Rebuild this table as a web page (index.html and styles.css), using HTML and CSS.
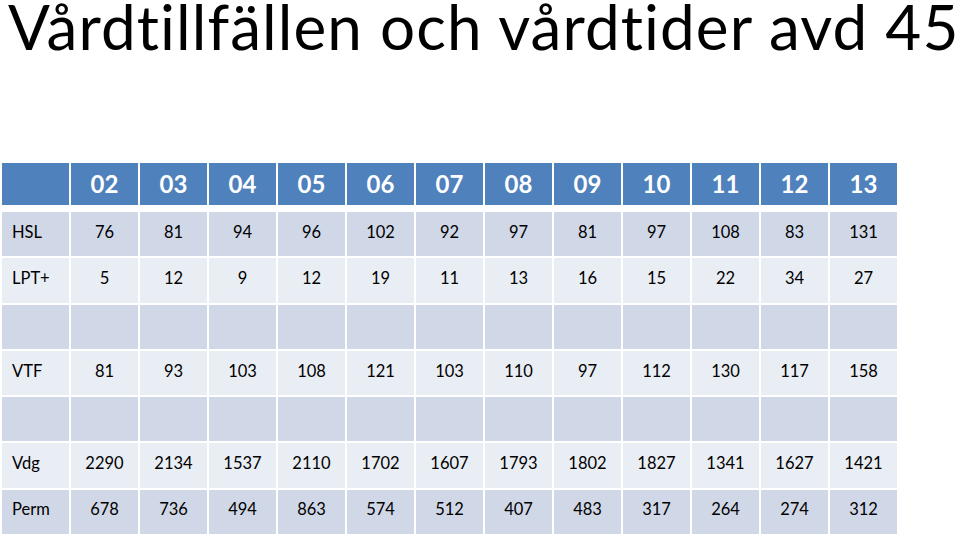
FILE: index.html
```html
<!DOCTYPE html>
<html>
<head>
<meta charset="utf-8">
<link rel="stylesheet" href="styles.css">
</head>
<body>
<h1 class="title">Vårdtillfällen och vårdtider avd 45</h1>
<div class="table">
  <div class="row head"><div class="cell first"></div><div class="cell">02</div><div class="cell">03</div><div class="cell">04</div><div class="cell">05</div><div class="cell">06</div><div class="cell">07</div><div class="cell">08</div><div class="cell">09</div><div class="cell">10</div><div class="cell">11</div><div class="cell">12</div><div class="cell">13</div></div>
  <div class="row dark"><div class="cell first">HSL</div><div class="cell">76</div><div class="cell">81</div><div class="cell">94</div><div class="cell">96</div><div class="cell">102</div><div class="cell">92</div><div class="cell">97</div><div class="cell">81</div><div class="cell">97</div><div class="cell">108</div><div class="cell">83</div><div class="cell">131</div></div>
  <div class="row light"><div class="cell first">LPT+</div><div class="cell">5</div><div class="cell">12</div><div class="cell">9</div><div class="cell">12</div><div class="cell">19</div><div class="cell">11</div><div class="cell">13</div><div class="cell">16</div><div class="cell">15</div><div class="cell">22</div><div class="cell">34</div><div class="cell">27</div></div>
  <div class="row dark"><div class="cell first"></div><div class="cell"></div><div class="cell"></div><div class="cell"></div><div class="cell"></div><div class="cell"></div><div class="cell"></div><div class="cell"></div><div class="cell"></div><div class="cell"></div><div class="cell"></div><div class="cell"></div><div class="cell"></div></div>
  <div class="row light"><div class="cell first">VTF</div><div class="cell">81</div><div class="cell">93</div><div class="cell">103</div><div class="cell">108</div><div class="cell">121</div><div class="cell">103</div><div class="cell">110</div><div class="cell">97</div><div class="cell">112</div><div class="cell">130</div><div class="cell">117</div><div class="cell">158</div></div>
  <div class="row dark"><div class="cell first"></div><div class="cell"></div><div class="cell"></div><div class="cell"></div><div class="cell"></div><div class="cell"></div><div class="cell"></div><div class="cell"></div><div class="cell"></div><div class="cell"></div><div class="cell"></div><div class="cell"></div><div class="cell"></div></div>
  <div class="row light"><div class="cell first">Vdg</div><div class="cell">2290</div><div class="cell">2134</div><div class="cell">1537</div><div class="cell">2110</div><div class="cell">1702</div><div class="cell">1607</div><div class="cell">1793</div><div class="cell">1802</div><div class="cell">1827</div><div class="cell">1341</div><div class="cell">1627</div><div class="cell">1421</div></div>
  <div class="row dark"><div class="cell first">Perm</div><div class="cell">678</div><div class="cell">736</div><div class="cell">494</div><div class="cell">863</div><div class="cell">574</div><div class="cell">512</div><div class="cell">407</div><div class="cell">483</div><div class="cell">317</div><div class="cell">264</div><div class="cell">274</div><div class="cell">312</div></div>
</div>
</body>
</html>
```
FILE: styles.css
```css
html, body {
  margin: 0;
  padding: 0;
  background: #ffffff;
}
body {
  font-family: "Lato", "Liberation Sans", sans-serif;
  font-variant-ligatures: none;
  color: #000;
  width: 960px;
  height: 537px;
  overflow: hidden;
}
.title {
  margin: 0;
  padding: 0 0 0 8px;
  font-weight: 400;
  font-size: 62px;
  letter-spacing: 1.1px;
  line-height: 52px;
  height: 163px;
  box-sizing: border-box;
  white-space: nowrap;
}
.table {
  margin-left: 2px;
  width: 895px;
  display: flex;
  flex-direction: column;
  gap: 2px;
}
.row {
  display: grid;
  grid-template-columns: repeat(13, 67px);
  column-gap: 2px;
  height: 44.3px;
}
.row.head {
  height: 42px;
  margin-bottom: 5px;
}
.cell {
  display: flex;
  align-items: center;
  justify-content: center;
  font-size: 16.5px;
  padding-bottom: 5px;
  box-sizing: border-box;
}
.cell.first {
  justify-content: flex-start;
  padding-left: 10px;
}
.head .cell {
  background: #4f81bd;
  color: #fff;
  font-weight: 700;
  font-size: 24px;
  padding-bottom: 2px;
}
.dark .cell { background: #d0d8e8; }
.light .cell { background: #e9edf4; }
```
